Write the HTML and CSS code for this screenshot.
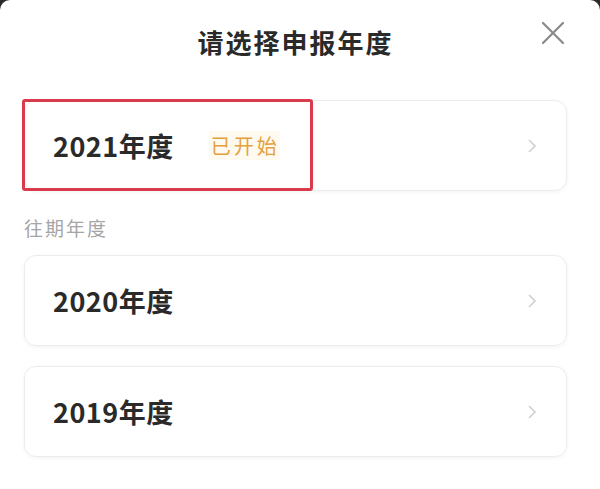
FILE: index.html
```html
<!DOCTYPE html>
<html lang="zh-CN">
<head>
  <meta charset="UTF-8" />
  <meta name="viewport" content="width=device-width, initial-scale=1.0"/>
  <title>请选择申报年度</title>
  <link rel="stylesheet" href="styles.css">
</head>
<body>
  <div class="sheet">
    <div class="sheet-head">
      <h1>请选择申报年度</h1>
      <button class="close-btn" aria-label="关闭">
        <svg width="24" height="24" viewBox="0 0 24 24">
          <path d="M2 2 L22 22 M22 2 L2 22" stroke="#8a8a8a" stroke-width="2.2" fill="none" stroke-linecap="round"/>
        </svg>
      </button>
    </div>

    <a class="year-card" href="#">
      <span class="year">2021年度</span>
      <span class="badge">已开始</span>
      <span class="arrow">
        <svg width="10" height="16" viewBox="0 0 10 16">
          <path d="M2 2 L8 8 L2 14" stroke="#cfcfcf" stroke-width="1.6" fill="none"/>
        </svg>
      </span>
      <span class="highlight"></span>
    </a>

    <p class="section-label">往期年度</p>

    <div class="year-list">
      <a class="year-card" href="#">
        <span class="year">2020年度</span>
        <span class="arrow">
          <svg width="10" height="16" viewBox="0 0 10 16">
            <path d="M2 2 L8 8 L2 14" stroke="#cfcfcf" stroke-width="1.6" fill="none"/>
          </svg>
        </span>
      </a>
      <a class="year-card" href="#">
        <span class="year">2019年度</span>
        <span class="arrow">
          <svg width="10" height="16" viewBox="0 0 10 16">
            <path d="M2 2 L8 8 L2 14" stroke="#cfcfcf" stroke-width="1.6" fill="none"/>
          </svg>
        </span>
      </a>
    </div>
  </div>
</body>
</html>
```

FILE: styles.css
```css
body {
  margin: 0;
  background: #2b2b2b;
  font-family: "Noto Sans CJK SC", "Noto Sans", sans-serif;
  color: #333;
}

.sheet {
  background: #fff;
  border-radius: 10px 10px 0 0;
  min-height: 489px;
  padding: 0 33px 0 24px;
  box-sizing: border-box;
}

.sheet-head {
  height: 100px;
  display: flex;
  align-items: flex-start;
  justify-content: center;
  position: relative;
}

.sheet-head h1 {
  margin: 26px 0 0 0;
  font-size: 26px;
  line-height: 32px;
  font-weight: 700;
  color: #2a2a2a;
  letter-spacing: 2px;
}

.close-btn {
  position: absolute;
  right: 2px;
  top: 21px;
  background: none;
  border: none;
  padding: 0;
  cursor: pointer;
}

.year-card {
  position: relative;
  display: flex;
  align-items: center;
  height: 91px;
  padding: 0 29px 0 28px;
  border: 1px solid #ececec;
  border-radius: 12px;
  box-shadow: 0 1px 4px rgba(0, 0, 0, 0.05);
  text-decoration: none;
  box-sizing: border-box;
}

.year {
  font-size: 27px;
  font-weight: 700;
  color: #2a2a2a;
  letter-spacing: 0.5px;
}

.badge {
  margin-left: 35px;
  font-size: 20px;
  color: #e3a13f;
  background: #fffaf0;
  letter-spacing: 3px;
  padding: 0 0 0 2px;
}

.arrow {
  margin-left: auto;
  display: flex;
}

.highlight {
  position: absolute;
  left: -3px;
  top: -2px;
  width: 291px;
  height: 92px;
  border: 3px solid #d93b4d;
  border-radius: 3px;
  box-sizing: border-box;
}

.section-label {
  margin: 24px 0 14px 0;
  font-size: 19px;
  line-height: 26px;
  color: #a5a5a5;
  letter-spacing: 2px;
}

.year-list {
  display: flex;
  flex-direction: column;
  gap: 20px;
}
```
